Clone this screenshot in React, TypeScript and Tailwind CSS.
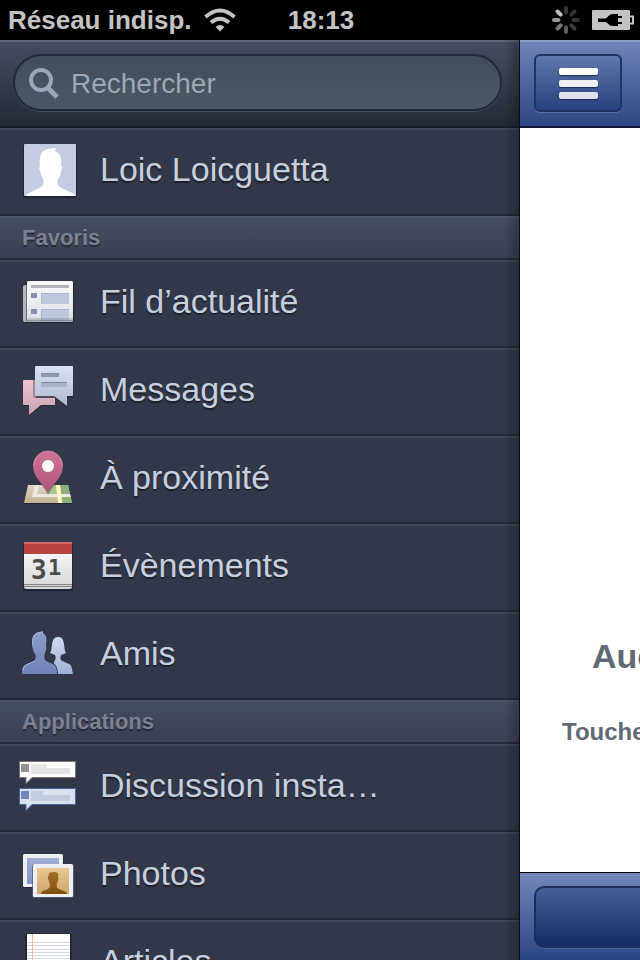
import type { ReactNode } from 'react';

function Svg({ children }: { children: ReactNode }) {
  return (
    <svg width="88" height="84" viewBox="0 2 88 84" className="shrink-0" aria-hidden="true">
      {children}
    </svg>
  );
}

function Grad({ id, from, to }: { id: string; from: string; to: string }) {
  return (
    <linearGradient id={id} x1="0" y1="0" x2="0" y2="1">
      <stop offset="0" stopColor={from} />
      <stop offset="1" stopColor={to} />
    </linearGradient>
  );
}

function AvatarIcon() {
  return (
    <Svg>
      <rect x="23" y="17" width="54" height="53" rx="2" fill="#1f2533" />
      <rect x="24" y="16" width="52" height="52" rx="1" fill="#c3cce0" />
      <path
        d="M26 68C28 64 37 62 41 59C44 57 44 54 43 51C41 48 41 45 40 43C39 41 39 39 40 38C39 31 40 25 45 22C49 20 53 21 56 20L55 23C60 25 62 30 61 38C63 39 62 41 61 43C60 46 60 49 58 51C57 54 57 57 60 59C64 62 73 64 76 68Z"
        fill="#fff"
      />
    </Svg>
  );
}

function NewsIcon() {
  return (
    <Svg>
      <defs>
        <Grad id="news" from="#fafafa" to="#dcdfe6" />
      </defs>
      <rect x="24" y="23" width="50" height="40" rx="2" fill="#1f2533" />
      <rect x="23" y="25" width="8" height="37" rx="2" fill="#b4b6b9" />
      <rect x="27" y="21" width="46" height="41" rx="1.5" fill="url(#news)" />
      <path d="M26.500 25V61" stroke="#6d7179" />
      <path d="M31 25h38v3H31z" fill="#b1b3b6" />
      <path d="M31 33h6v5h-6zM31 49h6v5h-6z" fill="#8491ab" />
      <path d="M41 33h28v11H41zM41 49h28v12H41z" fill="#bec7dc" />
      <path d="M41.500 44V33.500H69M41.500 61V49.500H69" fill="none" stroke="#aab5cd" />
      <path d="M27 58h46v4H27z" fill="#59616e" opacity=".25" />
      <path d="M27 60h46v1.500H27z" fill="#59616e" opacity=".45" />
    </Svg>
  );
}

function MessagesIcon() {
  return (
    <Svg>
      <defs>
        <Grad id="pink" from="#edc3d2" to="#c8a2b2" />
        <Grad id="bubble" from="#dbe3f4" to="#aebad2" />
      </defs>
      <path d="M24 33h31v25H42L29 68V58h-5z" fill="#202635" />
      <path d="M24 32h31v25H41L29 67V57h-5q-1 0-1-1V33q0-1 1-1z" fill="url(#pink)" />
      <path d="M33 32h22v18H35q-2 0-2-2z" fill="#a48391" />
      <path d="M36 20h37v30h-6v10l-12-10H36z" fill="#202635" opacity=".6" />
      <path d="M36 18h36q1 0 1 1v28q0 1-1 1h-5v10L54 48H36q-1 0-1-1V19q0-1 1-1z" fill="url(#bubble)" />
      <path d="M41 25h18v4H41z" fill="#8e9bb1" />
      <path d="M41 34h26v5H41z" fill="#a8b4ca" />
      <path d="M41 25.500h18M41 34.500h26" stroke="#808da4" />
    </Svg>
  );
}

function PlacesIcon() {
  return (
    <Svg>
      <defs>
        <Grad id="pin" from="#d07498" to="#ad5579" />
        <Grad id="map" from="#e0d6c6" to="#c2b291" />
      </defs>
      <path d="M28 50h40l4 18H24z" fill="#202635" />
      <path d="M28 49h40l4 18H24z" fill="url(#map)" />
      <path d="M60 49h8l4 18h-9z" fill="#8fae78" />
      <path d="M50 49h6l1 9h-9z" fill="#a7c78d" />
      <path d="M35 49h4l-2 9h33l1 3H32z" fill="#eeeae2" />
      <path d="M56 49h4l2 18h-4z" fill="#fffbc0" />
      <path d="M48 59C43 48 33 43 33 30a15 15 0 0 1 30 0C63 43 53 48 48 59z" fill="#252b39" opacity=".4" />
      <path d="M48 57C44 48 33 42 33 30a15 15 0 0 1 30 0C63 42 52 48 48 57z" fill="url(#pin)" />
      <path d="M34 29a14 14 0 0 1 28 0" fill="none" stroke="#e297b2" opacity=".7" />
      <circle cx="48" cy="30" r="6" fill="#fff" />
    </Svg>
  );
}

function EventsIcon() {
  return (
    <Svg>
      <defs>
        <Grad id="cal" from="#fff" to="#d6d6d6" />
      </defs>
      <rect x="23" y="19" width="50" height="48" rx="2" fill="#202635" />
      <path d="M24 18h48v45q0 2-2 2H26q-2 0-2-2z" fill="url(#cal)" />
      <path d="M24 18h48v12H24z" fill="#b9443f" />
      <path d="M24 19h48" stroke="#cf6a62" strokeWidth="2" />
      <path d="M24 60.500h48M24 62.500h48" stroke="#808080" />
      <g fill="#4c4c4c" className="font-['DejaVu_Sans_Mono',monospace] font-bold [text-shadow:none]">
        <text x="31" y="55" fontSize="26">3</text>
        <text x="48" y="51" fontSize="22">1</text>
      </g>
    </Svg>
  );
}

function FriendsIcon() {
  return (
    <Svg>
      <defs>
        <Grad id="man" from="#8c9dcb" to="#7082b6" />
        <Grad id="woman" from="#cdd9ee" to="#9fb1d6" />
      </defs>
      <path
        d="M54 62V50C56 48 56 45 55 43L50 41C53 38 50 25 58 25C66 25 63 36 66 41L61 43C60 46 60 48 62 49L69 52C72 53 72 58 73 62H54z"
        fill="url(#woman)"
      />
      <path
        d="M22 62C22 56 23 53 27 52L34 49C36 47 36 44 35 42C33 40 33 37 32 34C32 27 32 24 36 21C39 19 41 20 43 19V21C47 23 47 28 46 33C47 36 46 39 45 41C44 44 44 47 46 49L53 52C56 54 57 56 57 62z"
        fill="url(#man)"
        stroke="#2a3142"
        strokeWidth="2"
        paintOrder="stroke"
      />
      <path d="M23 59C23 55 25 53 28 52L35 49M33 33C32 26 34 23 36 22C39 20 41 21 43 20" fill="none" stroke="#a7b5db" />
    </Svg>
  );
}

function ChatIcon() {
  return (
    <Svg>
      <path d="M19.500 17.500h56v16H32l-6 6v-6h-6.500z" fill="#fdfdfc" stroke="#777670" />
      <path d="M21 20h8v8h-8z" fill="#929292" />
      <path d="M31 20h16v4H31z" fill="#e6e6e6" />
      <path d="M31 24h39v6H31z" fill="#e3e4e4" />
      <path d="M19.500 44.500h56v16H32l-6 6v-6h-6.500z" fill="#dbe1ee" stroke="#4664a5" />
      <path d="M21 47h8v8h-8z" fill="#6f86b9" />
      <path d="M31 47h12v4H31z" fill="#c2cbe0" />
      <path d="M31 51h39v6H31z" fill="#c2cbe0" />
    </Svg>
  );
}

function PhotosIcon() {
  return (
    <Svg>
      <defs>
        <Grad id="blue" from="#a1afd2" to="#8394c0" />
        <Grad id="sepia" from="#e8c794" to="#cfa66b" />
        <Grad id="bust" from="#a47129" to="#7e4e0c" />
      </defs>
      <rect x="23" y="23" width="41" height="33" rx="2" fill="#202635" />
      <rect x="23" y="22" width="40" height="33" rx="1.500" fill="#eef0f5" />
      <path d="M27 26h32v26H27z" fill="url(#blue)" />
      <rect x="32" y="32" width="42" height="34" rx="2" fill="#565f73" opacity=".8" />
      <rect x="33" y="32" width="40" height="33" rx="1.500" fill="#eef0f5" />
      <path d="M37 36h32v26H37z" fill="url(#sepia)" />
      <path
        d="M41 62C41 58 46 59 49 56C51 54 49 51 49 49C47 46 48 44 49 43C48 41 50 40 54 40C58 40 59 42 58 45C59 47 58 49 57 51C57 54 56 56 59 57C63 59 67 59 67 62z"
        fill="url(#bust)"
      />
    </Svg>
  );
}

function NotesIcon() {
  return (
    <Svg>
      <rect x="25.500" y="13.500" width="46" height="66" rx="1" fill="#1c212d" />
      <path d="M27 14h43v66H27z" fill="#fefefe" />
      <path d="M27 22.500h43M27 25.500h43M27 29.500h43M27 32.500h43M27 35.500h43M27 38.500h43" stroke="#d3d9e4" />
      <path d="M32.500 14v66" stroke="#f6b89f" />
    </Svg>
  );
}

function Row({ icon, label }: { icon: ReactNode; label: string }) {
  return (
    <li>
      <a
        href="#"
        className="flex h-22 items-center gap-3 border-y-2 border-t-[#414758] border-b-[#232937] bg-[#32384a] text-[34px] leading-10 text-[#c7cfdf] [text-shadow:0_2px_1px_#1b202c]"
      >
        {icon}
        <span className="truncate pb-1.5">{label}</span>
      </a>
    </li>
  );
}

function Section({ title }: { title: string }) {
  return (
    <h2 className="flex h-11 items-center border-y-2 border-t-[#505669] border-b-[#232937] bg-linear-to-b from-[#454d60] to-[#3b4053] px-5.5 text-[22px] leading-6 font-bold text-[#7d8092] [text-shadow:0_2px_1px_#252b38]">
      {title}
    </h2>
  );
}

const spokes = ['#343434', '#343434', '#343434', '#3a3a3a', '#5c5c5c', '#787878', '#959595', '#bcbcbc'];

function StatusBar() {
  return (
    <header className="flex h-10 shrink-0 items-center bg-black pr-1.5 pl-2 text-[26px] leading-8 font-bold text-[#c3c3c3]">
      <div className="flex flex-1 items-center gap-3">
        <span className="whitespace-nowrap">Réseau indisp.</span>
        <svg width="32" height="24" viewBox="0 0 32 24" aria-label="Wi-Fi">
          <path d="M1.500 9Q16-4 30.500 9M7 14.500Q16 7 25 14.500" fill="none" stroke="#c3c3c3" strokeWidth="4" />
          <path d="M11.500 19Q16 15 20.500 19L16 23.500z" fill="#c3c3c3" />
        </svg>
      </div>
      <time>18:13</time>
      <div className="flex flex-1 items-center justify-end gap-3">
        <svg width="28" height="28" viewBox="-14 -14 28 28" aria-label="Chargement">
          {spokes.map((color, i) => (
            <path key={i} d="M0-7.500V-12" stroke={color} strokeWidth="4" strokeLinecap="round" transform={`rotate(${i * 45})`} />
          ))}
        </svg>
        <svg width="42" height="20" viewBox="0 0 42 20" aria-label="Batterie en charge">
          <rect width="38" height="20" rx="1" fill="#c3c3c3" />
          <path d="M38 6.500h3v7h-3" fill="none" stroke="#c3c3c3" strokeWidth="2" />
          <path d="M6 8.500h7C16 8.500 16 4 21 4h5v2h4v2h-4v4h4v2h-4v2h-5c-5 0-5-4-8-4H6z" fill="#000" />
        </svg>
      </div>
    </header>
  );
}

function Drawer() {
  return (
    <nav aria-label="Menu" className="relative min-w-0 flex-1 overflow-hidden bg-[#32384a]">
      <form className="flex h-22 items-start border-t-2 border-b-2 border-t-[#5c6575] border-b-[#171c28] bg-linear-to-b from-[#464c5e] via-[#343c4b] to-[#222a35] pt-3 pr-4.5 pl-3.25">
        <label className="flex h-14.25 w-full items-center gap-3 rounded-full border-2 border-[#222939] bg-linear-to-b from-[#434c59] to-[#4c5766] pl-3.5 shadow-[0_1px_0_#465060]">
          <svg width="30" height="32" viewBox="0 0 30 32" aria-hidden="true">
            <circle cx="12" cy="13" r="10" fill="none" stroke="#9ca8b9" strokeWidth="4" />
            <path d="M19 21l9 9" stroke="#9ca8b9" strokeWidth="5" />
          </svg>
          <input
            type="search"
            aria-label="Rechercher"
            placeholder="Rechercher"
            className="min-w-0 flex-1 bg-transparent pt-0.5 text-[28px] leading-8 text-[#9ca8b9] outline-none placeholder:text-[#9ca8b9]"
          />
        </label>
      </form>
      <ul>
        <Row icon={<AvatarIcon />} label="Loic Loicguetta" />
      </ul>
      <Section title="Favoris" />
      <ul>
        <Row icon={<NewsIcon />} label="Fil d’actualité" />
        <Row icon={<MessagesIcon />} label="Messages" />
        <Row icon={<PlacesIcon />} label="À proximité" />
        <Row icon={<EventsIcon />} label="Évènements" />
        <Row icon={<FriendsIcon />} label="Amis" />
      </ul>
      <Section title="Applications" />
      <ul>
        <Row icon={<ChatIcon />} label="Discussion insta…" />
        <Row icon={<PhotosIcon />} label="Photos" />
        <Row icon={<NotesIcon />} label="Articles" />
      </ul>
      <div className="pointer-events-none absolute inset-y-0 right-0 w-4 border-r border-[#0b0e16] bg-linear-to-r from-transparent to-black/25" />
    </nav>
  );
}

function Page() {
  return (
    <main className="flex w-30 shrink-0 flex-col overflow-hidden bg-white font-bold whitespace-nowrap text-[#616974]">
      <div className="flex h-22 shrink-0 items-start border-t-2 border-b-2 border-t-[#8b9cc3] border-b-[#121833] bg-linear-to-b from-[#7085b7] to-[#2c4685] px-3.5 pt-3">
        <button
          type="button"
          aria-label="Ouvrir le menu"
          className="flex h-14.5 w-22 flex-col items-center justify-center gap-1.25 rounded-md border-2 border-[#23335f] bg-linear-to-b from-[#5f77ab] to-[#27417d] shadow-[0_1px_0_#5570a8]"
        >
          <span className="h-1.75 w-9.75 rounded-xs bg-white shadow-[0_1px_1px_#1b2b56]" />
          <span className="h-1.75 w-9.75 rounded-xs bg-[#eff0f6] shadow-[0_1px_1px_#1b2b56]" />
          <span className="h-1.75 w-9.75 rounded-xs bg-[#dde1ed] shadow-[0_1px_1px_#1b2b56]" />
        </button>
      </div>
      <div className="flex flex-1 flex-col justify-end gap-10 pb-31">
        <h1 className="pl-18 text-[34px] leading-10">Auc</h1>
        <p className="pl-10.5 text-[24px] leading-8">Touchez</p>
      </div>
      <div className="flex h-22 shrink-0 items-start border-t border-black bg-linear-to-b from-[#7388b9] to-[#2a4584] pt-3.25 pl-3.5">
        <button
          type="button"
          aria-label="Actualiser"
          className="h-15.5 w-full rounded-l-[10px] border-2 border-r-0 border-[#1d2d57] bg-linear-to-b from-[#455f95] to-[#132c66] shadow-[0_1px_0_#4d679f]"
        />
      </div>
    </main>
  );
}

export default function App() {
  return (
    <div className="flex h-screen flex-col overflow-hidden font-['Liberation_Sans',Arial,sans-serif]">
      <StatusBar />
      <div className="flex min-h-0 flex-1">
        <Drawer />
        <Page />
      </div>
    </div>
  );
}
